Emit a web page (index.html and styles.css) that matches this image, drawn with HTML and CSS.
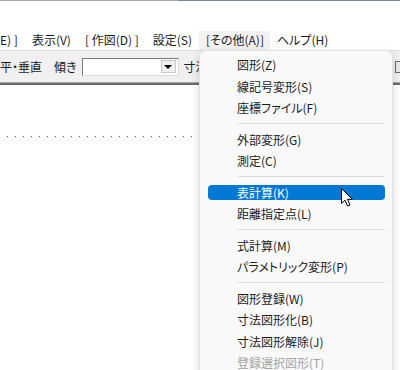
FILE: index.html
```html
<!DOCTYPE html>
<html lang="ja">
<head>
  <meta charset="UTF-8">
  <title>その他メニュー</title>
  <link rel="stylesheet" href="styles.css">
</head>
<body>
  <div class="top-line">
    <div class="top-line-left"></div>
    <div class="top-line-right"></div>
  </div>
  <div class="title-area"></div>

  <nav class="menubar">
    <span class="menu-item first">E) ]</span>
    <span class="menu-item">表示(V)</span>
    <span class="menu-item">[ 作図(D) ]</span>
    <span class="menu-item">設定(S)</span>
    <span class="menu-item open">[その他(A)]</span>
    <span class="menu-item">ヘルプ(H)</span>
  </nav>

  <div class="toolbar">
    <span class="tb-label first">平・垂直</span>
    <span class="tb-label">傾き</span>
    <div class="combo">
      <div class="combo-text"></div>
      <div class="combo-btn"><span class="combo-arrow"></span></div>
    </div>
    <span class="tb-label">寸法</span>
    <div class="tb-box"></div>
  </div>

  <div class="canvas">
    <div class="dots"></div>
  </div>

  <!-- menu deroulant -->
  <div class="popup">
    <div class="popup-item">図形(Z)</div>
    <div class="popup-item">線記号変形(S)</div>
    <div class="popup-item">座標ファイル(F)</div>
    <div class="popup-sep"></div>
    <div class="popup-item">外部変形(G)</div>
    <div class="popup-item">測定(C)</div>
    <div class="popup-sep"></div>
    <div class="popup-item active"><span>表計算(K)</span></div>
    <div class="popup-item">距離指定点(L)</div>
    <div class="popup-sep"></div>
    <div class="popup-item">式計算(M)</div>
    <div class="popup-item">パラメトリック変形(P)</div>
    <div class="popup-sep"></div>
    <div class="popup-item">図形登録(W)</div>
    <div class="popup-item">寸法図形化(B)</div>
    <div class="popup-item">寸法図形解除(J)</div>
    <div class="popup-item disabled">登録選択図形(T)</div>
  </div>

  <svg class="cursor" width="14" height="21" viewBox="0 0 14 21">
    <path d="M1.5 1.5 L1.5 16.5 L5 13.2 L7.6 19 L10 18 L7.5 12.3 L12.3 12.3 Z" fill="#fff" stroke="#000" stroke-width="1" stroke-linejoin="round"></path>
  </svg>
</body>
</html>
```

FILE: styles.css
```css
* {
  margin: 0;
  padding: 0;
  box-sizing: border-box;
}

body {
  width: 400px;
  height: 370px;
  overflow: hidden;
  position: relative;
  background-color: #fff;
  font-family: "Noto Sans CJK JP", "Noto Sans", sans-serif;
  font-size: 12px;
  font-feature-settings: "palt";
  color: #1b1b1b;
}

/* Ligne du haut */
.top-line {
  display: flex;
  height: 1px;
}

.top-line-left {
  width: 178px;
  background-color: #aaaaaa;
}

.top-line-right {
  flex: 1;
  background-color: #778a97;
}

.title-area {
  height: 30px;
}

/* Barre de menu */
.menubar {
  display: flex;
  height: 19px;
  align-items: center;
  white-space: nowrap;
}

.menu-item {
  padding: 0 7px;
  height: 19px;
  line-height: 18px;
}

.menu-item.first {
  padding-left: 0;
}

.menu-item.open {
  background-color: #f2f2f2;
  padding-right: 6px;
}

/* Barre d'outils */
.toolbar {
  display: flex;
  align-items: center;
  height: 35px;
  background-color: #f0f0f0;
  border-top: 1px solid #dcdcdc;
  border-bottom: 2px solid #6b6b6b;
  box-shadow: inset 0 -1px 0 #a8a8a8;
  white-space: nowrap;
  padding-bottom: 1px;
}

.tb-label {
  margin-right: 5px;
}

.tb-label.first {
  margin-right: 12px;
}

.combo {
  display: flex;
  align-items: center;
  width: 97px;
  height: 18px;
  margin-right: 5px;
  background-color: #fff;
  border: 1px solid #7a7a7a;
  border-right-color: #dcdcdc;
  border-bottom-color: #dcdcdc;
  padding: 1px 2px 1px 1px;
}

.combo-text {
  flex: 1;
}

.combo-btn {
  width: 15px;
  height: 13px;
  background-color: #f0f0f0;
  border: 1px solid #c8c8c8;
  display: flex;
  align-items: center;
  justify-content: center;
}

.combo-arrow {
  width: 0;
  height: 0;
  border-left: 4px solid transparent;
  border-right: 4px solid transparent;
  border-top: 4px solid #000;
}

.tb-box {
  margin-left: auto;
  margin-right: -6px;
  width: 11px;
  height: 12px;
  border: 1px solid #6b6b6b;
  background-color: #e8e8e8;
}

/* Zone de dessin */
.canvas {
  padding-top: 51px;
}

.dots {
  height: 1px;
  width: 198px;
  background-image: linear-gradient(to right, #ff00ff 1px, transparent 1px);
  background-size: 8px 1px;
  background-position: 7px 0;
  background-repeat: repeat-x;
}

/* Menu déroulant */
.popup {
  position: absolute;
  left: 199px;
  top: 50px;
  width: 194px;
  height: 330px;
  padding-top: 3px;
  background-color: #f9f9f9;
  border: 1px solid #e3e3e3;
  border-radius: 7px;
  box-shadow: 0 3px 9px rgba(0, 0, 0, 0.16);
  overflow: hidden;
}

.popup-item {
  height: 21.5px;
  line-height: 21.5px;
  padding-left: 37px;
  white-space: nowrap;
}

.popup-item.active {
  padding: 3.5px 7px 3px 8px;
  line-height: 15px;
}

.popup-item.active span {
  display: block;
  height: 15px;
  padding-left: 29px;
  background-color: #0078d4;
  color: #fff;
  border-radius: 4px;
}

.popup-item.disabled {
  color: #a3a3a3;
}

.popup-sep {
  height: 1px;
  margin: 4.5px 7px 4.5px 38px;
  background-color: #dadada;
}

.cursor {
  position: absolute;
  left: 340px;
  top: 187px;
}
```
